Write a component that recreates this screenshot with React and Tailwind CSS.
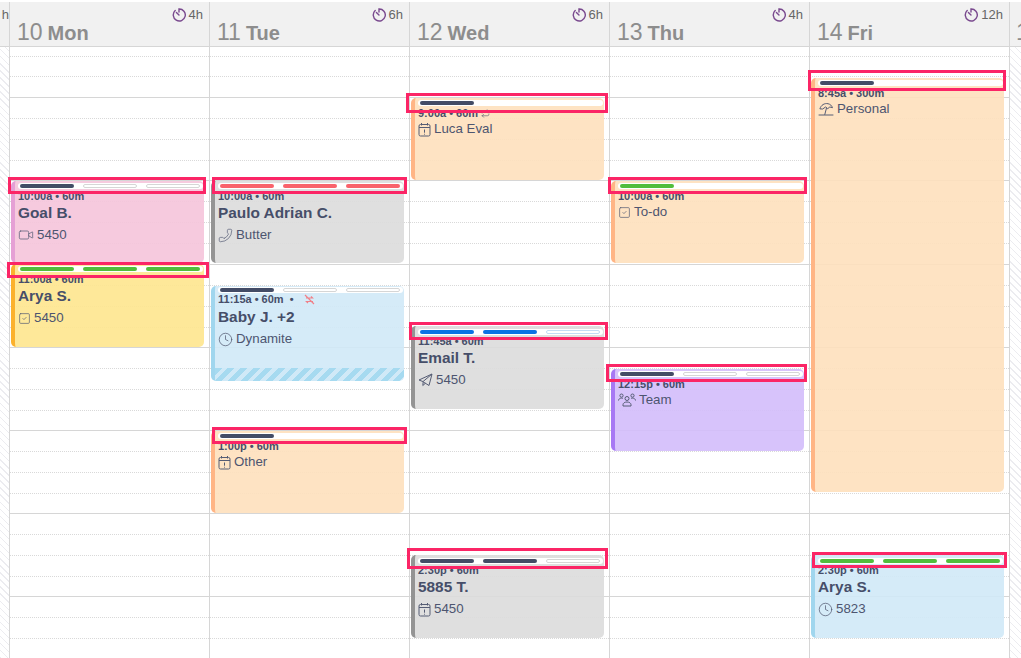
import React from 'react';
import { Video, Phone, SquareCheck, Clock, Repeat } from 'lucide-react';

const GRID_TOP = 47;

const TimerIcon = () => (
  <svg width="14" height="14" viewBox="0 0 14 14" fill="none" stroke="#7a4a8f" strokeWidth="1.4" strokeLinecap="round">
    <path d="M3.200 2.600A6 6 0 1 0 7 1v3" />
    <path d="M4.400 4.400 7 7" />
  </svg>
);

const CalendarIcon = () => (
  <svg width="13" height="15" viewBox="0 0 13 15" fill="none" stroke="#555c74" strokeWidth="1">
    <rect x="1" y="2.500" width="11" height="11.500" rx="1.500" />
    <path d="M1 5.500h11M3.500 1v2.500M9.500 1v2.500M6.500 7.500v3.200M6.500 11.800v.8" />
  </svg>
);

const PlaneIcon = () => (
  <svg width="15" height="14" viewBox="0 0 15 14" fill="none" stroke="#555c74" strokeWidth="1" strokeLinejoin="round">
    <path d="M14 1 1 7l4 1.600L14 1l-3 11.500-5.800-3.600-.4 3.600 2.600-2.200" />
  </svg>
);

const TeamIcon = () => (
  <svg width="18" height="14" viewBox="0 0 18 14" fill="none" stroke="#555c74" strokeWidth="1">
    <circle cx="9" cy="5.500" r="2" />
    <path d="M5 13v-1.300C5 10.100 6.700 9 9 9s4 1.100 4 2.700V13z" />
    <circle cx="3.500" cy="2.600" r="1.600" />
    <circle cx="14.500" cy="2.600" r="1.600" />
    <path d="M.5 7.500c0-1.300 1.300-2.400 3-2.400.6 0 1.100.1 1.500.4M17.500 7.500c0-1.300-1.300-2.400-3-2.400-.6 0-1.100.1-1.500.4" />
  </svg>
);

const BeachIcon = () => (
  <svg width="16" height="14" viewBox="0 0 16 14" fill="none" stroke="#555c74" strokeWidth="1" strokeLinecap="round">
    <path d="M2 6.500C3 3 6.500 1 10 1.700c2.300.5 3.800 2 4.500 4L11.800 5 9.700 6.700 7.500 5 5 6.800z" />
    <path d="M8.500 6 6.800 12.500M1 13h14" />
  </svg>
);

const NoSyncIcon = () => (
  <svg width="11" height="11" viewBox="0 0 11 11" fill="none" stroke="#f08088" strokeWidth="1.200">
    <path d="M1 1l9 9M2 4h6.500L7 2.500M9 7.500H2.500L4 9" />
  </svg>
);

const subIcons = {
  video: <Video size={16} strokeWidth={1.1} color="#555c74" />,
  phone: <Phone size={15} strokeWidth={1.1} color="#555c74" className="-scale-x-100" />,
  check: <SquareCheck size={13} strokeWidth={1.3} color="#555c74" />,
  clock: <Clock size={15} strokeWidth={1.2} color="#555c74" />,
  calendar: <CalendarIcon />,
  plane: <PlaneIcon />,
  team: <TeamIcon />,
  beach: <BeachIcon />,
};

const skins = {
  pink: 'bg-[#f5c4da]/90 border-[#e5a0d5]',
  yellow: 'bg-[#fee68e]/90 border-[#fbb12d]',
  gray: 'bg-[#dbdbdb]/90 border-[#949494]',
  blue: 'bg-[#d0e9f7]/90 border-[#a0d6ee]',
  peach: 'bg-[#fee0bd]/90 border-[#ffb585]',
  purple: 'bg-[#d3bcfb]/90 border-[#a778f4]',
};

const barColors = {
  slate: 'bg-[#434c66]',
  green: 'bg-[#52bd3c]',
  red: 'bg-[#f9626b]',
  blue: 'bg-[#0b72e4]',
};

const days = [
  {
    num: 10, name: 'Mon', total: '4h',
    events: [
      { top: 181, height: 82, skin: 'pink', time: '10:00a • 60m', title: 'Goal B.', sub: '5450', icon: 'video', bar: 'slate', done: 1, box: [8, 177, 198, 17] },
      { top: 264, height: 83, skin: 'yellow', time: '11:00a • 60m', title: 'Arya S.', sub: '5450', icon: 'check', bar: 'green', done: 3, box: [7, 262, 202, 16] },
    ],
  },
  {
    num: 11, name: 'Tue', total: '6h',
    events: [
      { top: 181, height: 82, skin: 'gray', time: '10:00a • 60m', title: 'Paulo Adrian C.', sub: 'Butter', icon: 'phone', bar: 'red', done: 3, box: [212, 177, 195, 17] },
      { top: 286, height: 95, skin: 'blue', time: '11:15a • 60m  •', title: 'Baby J. +2', sub: 'Dynamite', icon: 'clock', bar: 'slate', done: 1, stripes: true, noSync: true, tight: true },
      { top: 431, height: 82, skin: 'peach', time: '1:00p • 60m', sub: 'Other', icon: 'calendar', bar: 'slate', done: 1, single: true, box: [212, 427, 195, 17] },
    ],
  },
  {
    num: 12, name: 'Wed', total: '6h',
    events: [
      { top: 98, height: 82, skin: 'peach', time: '9:00a • 60m', sub: 'Luca Eval', icon: 'calendar', bar: 'slate', done: 1, single: true, repeat: true, box: [406, 93, 202, 20] },
      { top: 326, height: 83, skin: 'gray', time: '11:45a • 60m', title: 'Email T.', sub: '5450', icon: 'plane', bar: 'blue', done: 2, lowBar: true, box: [409, 322, 199, 18] },
      { top: 555, height: 83, skin: 'gray', time: '2:30p • 60m', title: '5885 T.', sub: '5450', icon: 'calendar', bar: 'slate', done: 2, lowBar: true, box: [407, 548, 201, 21] },
    ],
  },
  {
    num: 13, name: 'Thu', total: '4h',
    events: [
      { top: 181, height: 82, skin: 'peach', time: '10:00a • 60m', sub: 'To-do', icon: 'check', bar: 'green', done: 1, single: true, box: [608, 177, 199, 17] },
      { top: 369, height: 82, skin: 'purple', time: '12:15p • 60m', sub: 'Team', icon: 'team', bar: 'slate', done: 1, box: [606, 364, 201, 18] },
    ],
  },
  {
    num: 14, name: 'Fri', total: '12h',
    events: [
      { top: 78, height: 414, skin: 'peach', time: '8:45a • 300m', sub: 'Personal', icon: 'beach', bar: 'slate', done: 1, single: true, box: [808, 70, 198, 21] },
      { top: 555, height: 83, skin: 'blue', time: '2:30p • 60m', title: 'Arya S.', sub: '5823', icon: 'clock', bar: 'green', done: 3, lowBar: true, box: [812, 552, 195, 16] },
    ],
  },
];

const Progress = ({ color, done, single }) => {
  const segments = single ? [0] : [0, 1, 2];
  const emptyBorder = color === 'blue' ? 'border-[#c3dcf5]' : 'border-[#d6d6d6]';
  return (
    <div className="flex h-[6px] gap-[9px] rounded-full bg-white px-[2px] py-[1px]">
      {segments.map((i) => (
        <div
          key={i}
          className={
            i < done
              ? `h-[4px] w-[54px] rounded-full ${barColors[color]}`
              : `h-[4px] w-[54px] rounded-full border border-solid bg-white ${emptyBorder}`
          }
        />
      ))}
    </div>
  );
};

const EventCard = ({ event }) => {
  const { skin, time, title, sub, icon, bar, done, single, stripes, noSync, repeat, tight, lowBar } = event;
  let padTop = 'pt-[2px]';
  if (tight) padTop = 'pt-[1px]';
  if (lowBar) padTop = 'pt-[3px]';
  return (
    <div
      className={`absolute left-[1px] w-[193px] overflow-hidden rounded-[5px] border-l-4 border-solid pl-[3px] ${padTop} ${skins[skin]}`}
      style={{ top: event.top - GRID_TOP, height: event.height }}
    >
      <div className="pr-[1px]">
        <Progress color={bar} done={done} single={single} />
      </div>
      <div className={`flex h-[14px] items-center whitespace-pre text-[11px] font-bold leading-[14px] text-[#464e69] ${tight || lowBar ? 'mt-[-1px]' : ''}`}>
        {time}
        {repeat && <Repeat size={9} strokeWidth={1.5} className="ml-[3px]" />}
        {noSync && <span className="ml-[10px]"><NoSyncIcon /></span>}
      </div>
      {title && <div className={`h-[20px] text-[15.400px] font-bold leading-[20px] text-[#464e69] ${tight ? 'mt-[1px]' : ''}`}>{title}</div>}
      <div className={`flex items-center gap-[3px] text-[13.300px] text-[#4d5570] ${title ? 'h-[24px]' : 'h-[18px]'}`}>
        {subIcons[icon]}
        <span>{sub}</span>
      </div>
      {stripes && (
        <div className="absolute inset-x-0 bottom-0 h-[13px] bg-[repeating-linear-gradient(135deg,#a6daf0_0,#a6daf0_5px,#d0e9f7_5px,#d0e9f7_9px)]" />
      )}
    </div>
  );
};

// one hour of the grid: solid line on top, then three dotted quarter lines
const HourRow = () => (
  <div className="h-[83.200px] border-t border-solid border-[#d6d6d6]">
    <div className="h-[21px] border-b border-dotted border-[#d9d9d9]" />
    <div className="h-[21px] border-b border-dotted border-[#d9d9d9]" />
    <div className="h-[21px] border-b border-dotted border-[#d9d9d9]" />
  </div>
);

const DayColumn = ({ day }) => (
  <div className="relative w-[200px] shrink-0 border-l border-solid border-[#d6d6d6]">
    <div className="h-[50.300px] pt-[9px]">
      <div className="h-[20px] border-t border-dotted border-[#d9d9d9]" />
      <div className="border-t border-dotted border-[#d9d9d9]" />
    </div>
    {[0, 1, 2, 3, 4, 5, 6].map((h) => (
      <HourRow key={h} />
    ))}
    {day.events.map((event) => (
      <EventCard key={event.time} event={event} />
    ))}
  </div>
);

const DayHeader = ({ day }) => (
  <div className="relative h-full w-[200px] shrink-0 border-l border-solid border-[#d6d6d6]">
    <div className="flex justify-end pr-[6px] pt-[5px]">
      <div className="flex items-center gap-[3px] text-[13px] leading-[16px] text-[#666]">
        <TimerIcon />
        <span>{day.total}</span>
      </div>
    </div>
    <div className="mt-[-4px] flex items-baseline gap-[5px] pl-[7px] text-[#8d8d8d]">
      <span className="text-[23px] leading-[26px]">{day.num}</span>
      <span className="text-[20px] font-bold leading-[26px]">{day.name}</span>
    </div>
  </div>
);

// annotation boxes drawn on top of the calendar
const Highlight = ({ box }) => (
  <div
    className="absolute border-[3px] border-solid border-[#fb2566]"
    style={{ left: box[0], top: box[1], width: box[2], height: box[3] }}
  />
);

const hatch = 'bg-[repeating-linear-gradient(45deg,#ececf0_0,#ececf0_1px,#ffffff_1px,#ffffff_5px)]';

export default function App() {
  const boxes = days.flatMap((d) => d.events.filter((e) => e.box).map((e) => e.box));
  return (
    <div className="relative h-[658px] w-[1021px] overflow-hidden bg-white pt-[2px] font-['Liberation_Sans',Arial,sans-serif]">
      <div className="flex h-[45px] border-b border-solid border-[#d6d6d6] bg-[#f1f1f1]">
        <div className="w-[9px] shrink-0 overflow-hidden pt-[5px] text-right text-[13px] leading-[16px] text-[#666]">h</div>
        {days.map((d) => (
          <DayHeader key={d.num} day={d} />
        ))}
        <div className="flex-1 overflow-hidden border-l border-solid border-[#d6d6d6] pl-[6px] pt-[17px] text-[23px] leading-[26px] text-[#8d8d8d]">1</div>
      </div>
      <div className="flex">
        <div className={`h-[611px] w-[9px] shrink-0 ${hatch}`} />
        {days.map((d) => (
          <DayColumn key={d.num} day={d} />
        ))}
        <div className={`h-[611px] flex-1 border-l border-solid border-[#d6d6d6] ${hatch}`} />
      </div>
      {boxes.map((b) => (
        <Highlight key={`${b[0]}-${b[1]}`} box={b} />
      ))}
    </div>
  );
}
